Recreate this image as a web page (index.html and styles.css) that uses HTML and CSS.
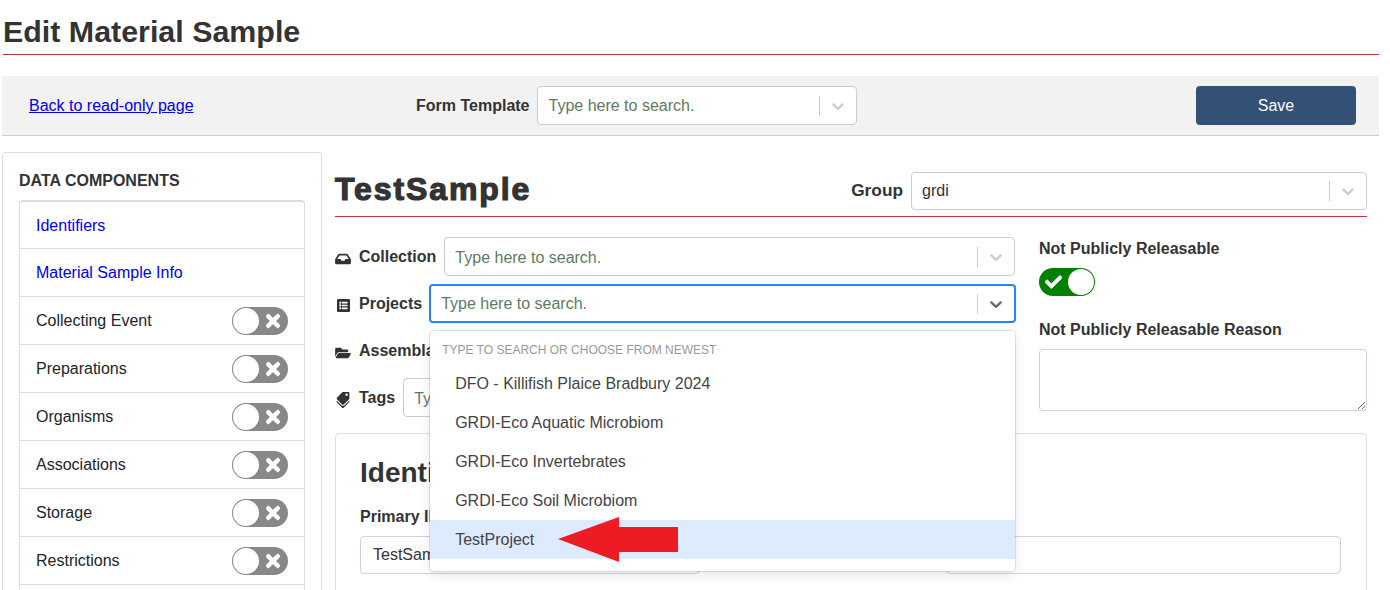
FILE: index.html
```html
<!DOCTYPE html>
<html lang="en">
<head>
    <meta charset="UTF-8">
    <meta name="viewport" content="width=device-width, initial-scale=1.0">
    <title>Edit Material Sample</title>
    <link rel="stylesheet" href="styles.css">
</head>
<body>
    <!-- Shared icons -->
    <svg class="sprite" xmlns="http://www.w3.org/2000/svg">
        <symbol id="chevron" viewBox="0 0 20 20"><path d="M4.516 7.548c0.436-0.446 1.043-0.481 1.576 0l3.908 3.747 3.908-3.747c0.533-0.481 1.141-0.446 1.574 0 0.436 0.445 0.408 1.197 0 1.615-0.406 0.418-4.695 4.502-4.695 4.502-0.217 0.223-0.502 0.335-0.787 0.335s-0.57-0.112-0.789-0.335c0 0-4.287-4.084-4.695-4.502s-0.436-1.17 0-1.615z"/></symbol>
        <symbol id="times" viewBox="0 0 352 512"><path d="M242.72 256l100.07-100.07c12.28-12.28 12.28-32.19 0-44.48l-22.24-22.24c-12.28-12.28-32.19-12.28-44.48 0L176 189.28 75.93 89.21c-12.28-12.28-32.19-12.28-44.48 0L9.21 111.45c-12.28 12.28-12.28 32.19 0 44.48L109.28 256 9.21 356.07c-12.28 12.28-12.28 32.19 0 44.48l22.24 22.24c12.28 12.28 32.2 12.28 44.48 0L176 322.72l100.07 100.07c12.28 12.28 32.2 12.28 44.48 0l22.24-22.24c12.28-12.28 12.28-32.19 0-44.48L242.72 256z"/></symbol>
        <symbol id="check" viewBox="0 0 512 512"><path d="M173.898 439.404l-166.4-166.4c-9.997-9.997-9.997-26.206 0-36.204l36.203-36.204c9.997-9.998 26.207-9.998 36.204 0L192 312.69 432.095 72.596c9.997-9.997 26.207-9.997 36.204 0l36.203 36.204c9.997 9.997 9.997 26.206 0 36.204l-294.4 294.401c-9.998 9.997-26.207 9.997-36.204-.001z"/></symbol>
        <symbol id="inbox" viewBox="0 0 576 512"><path d="M567.938 243.908L462.25 85.374A48.003 48.003 0 0 0 422.311 64H153.689a48 48 0 0 0-39.938 21.374L8.062 243.908A47.994 47.994 0 0 0 0 270.533V400c0 26.51 21.49 48 48 48h480c26.51 0 48-21.49 48-48V270.533a47.994 47.994 0 0 0-8.062-26.625zM162.252 128h251.497l85.333 128H376l-32 64H232l-32-64H76.918l85.334-128z"/></symbol>
        <symbol id="list" viewBox="0 0 512 512" preserveAspectRatio="none"><path d="M464 480H48c-26.51 0-48-21.49-48-48V80c0-26.51 21.49-48 48-48h416c26.51 0 48 21.49 48 48v352c0 26.51-21.49 48-48 48zM128 120c-22.091 0-40 17.909-40 40s17.909 40 40 40 40-17.909 40-40-17.909-40-40-40zm0 96c-22.091 0-40 17.909-40 40s17.909 40 40 40 40-17.909 40-40-17.909-40-40-40zm0 96c-22.091 0-40 17.909-40 40s17.909 40 40 40 40-17.909 40-40-17.909-40-40-40zm288-136v-32c0-6.627-5.373-12-12-12H204c-6.627 0-12 5.373-12 12v32c0 6.627 5.373 12 12 12h200c6.627 0 12-5.373 12-12zm0 96v-32c0-6.627-5.373-12-12-12H204c-6.627 0-12 5.373-12 12v32c0 6.627 5.373 12 12 12h200c6.627 0 12-5.373 12-12zm0 96v-32c0-6.627-5.373-12-12-12H204c-6.627 0-12 5.373-12 12v32c0 6.627 5.373 12 12 12h200c6.627 0 12-5.373 12-12z"/></symbol>
        <symbol id="folder" viewBox="0 0 576 512"><path d="M572.694 292.093L500.27 416.248A63.997 63.997 0 0 1 444.989 448H45.025c-18.523 0-30.064-20.093-20.731-36.093l72.424-124.155A64 64 0 0 1 152 256h399.964c18.523 0 30.064 20.093 20.73 36.093zM152 224h328v-48c0-26.51-21.49-48-48-48H272l-64-64H48C21.49 64 0 85.49 0 112v278.046l69.077-118.418C86.214 242.25 117.989 224 152 224z"/></symbol>
        <symbol id="tags" viewBox="0 0 640 512"><path d="M497.941 225.941L286.059 14.059A48 48 0 0 0 252.118 0H48C21.49 0 0 21.49 0 48v204.118a48 48 0 0 0 14.059 33.941l211.882 211.882c18.744 18.745 49.136 18.746 67.882 0l204.118-204.118c18.745-18.745 18.745-49.137 0-67.882zM112 160c-26.51 0-48-21.49-48-48s21.49-48 48-48 48 21.49 48 48-21.49 48-48 48zm513.941 133.823L421.823 497.941c-18.745 18.745-49.137 18.745-67.882 0l-.36-.36L527.64 323.522c16.999-16.999 26.36-39.6 26.36-63.64s-9.362-46.641-26.36-63.64L331.397 0h48.721a48 48 0 0 1 33.941 14.059l211.882 211.882c18.745 18.745 18.745 49.137 0 67.882z"/></symbol>
    </svg>

    <div class="page">
        <h1 class="page-title">Edit Material Sample</h1>

        <div class="button-bar">
            <div class="bar-link"><a href="#">Back to read-only page</a></div>
            <label class="bar-label">Form Template</label>
            <div class="select bar-select">
                <div class="select-value placeholder">Type here to search.</div>
                <span class="select-sep"></span>
                <svg class="select-arrow"><use href="#chevron"/></svg>
            </div>
            <button class="save-btn">Save</button>
        </div>

        <div class="content">
            <div class="sidebar">
                <div class="sidebar-title">DATA COMPONENTS</div>
                <div class="nav-list">
                    <div class="nav-item"><a href="#" class="nav-link">Identifiers</a></div>
                    <div class="nav-item"><a href="#" class="nav-link">Material Sample Info</a></div>
                    <div class="nav-item">Collecting Event <span class="toggle"><svg class="toggle-icon"><use href="#times"/></svg><span class="knob"></span></span></div>
                    <div class="nav-item">Preparations <span class="toggle"><svg class="toggle-icon"><use href="#times"/></svg><span class="knob"></span></span></div>
                    <div class="nav-item">Organisms <span class="toggle"><svg class="toggle-icon"><use href="#times"/></svg><span class="knob"></span></span></div>
                    <div class="nav-item">Associations <span class="toggle"><svg class="toggle-icon"><use href="#times"/></svg><span class="knob"></span></span></div>
                    <div class="nav-item">Storage <span class="toggle"><svg class="toggle-icon"><use href="#times"/></svg><span class="knob"></span></span></div>
                    <div class="nav-item">Restrictions <span class="toggle"><svg class="toggle-icon"><use href="#times"/></svg><span class="knob"></span></span></div>
                    <div class="nav-item"></div>
                </div>
            </div>

            <div class="main">
                <div class="sample-head">
                    <h2 class="sample-name">TestSample</h2>
                    <div class="group-field">
                        <label class="field-label group-label">Group</label>
                        <div class="select group-select">
                            <div class="select-value">grdi</div>
                            <span class="select-sep"></span>
                            <svg class="select-arrow"><use href="#chevron"/></svg>
                        </div>
                    </div>
                </div>

                <div class="form-top">
                    <div class="form-rows">
                        <div class="form-row">
                            <svg class="row-icon"><use href="#inbox"/></svg>
                            <label class="field-label">Collection</label>
                            <div class="select">
                                <div class="select-value placeholder">Type here to search.</div>
                                <span class="select-sep"></span>
                                <svg class="select-arrow"><use href="#chevron"/></svg>
                            </div>
                        </div>
                        <div class="form-row">
                            <svg class="row-icon list-icon"><use href="#list"/></svg>
                            <label class="field-label">Projects</label>
                            <div class="select select-open">
                                <div class="select-value placeholder">Type here to search.</div>
                                <span class="select-sep"></span>
                                <svg class="select-arrow"><use href="#chevron"/></svg>

                                <div class="menu">
                                    <div class="menu-heading">Type to search or choose from newest</div>
                                    <div class="menu-item">DFO - Killifish Plaice Bradbury 2024</div>
                                    <div class="menu-item">GRDI-Eco Aquatic Microbiom</div>
                                    <div class="menu-item">GRDI-Eco Invertebrates</div>
                                    <div class="menu-item">GRDI-Eco Soil Microbiom</div>
                                    <div class="menu-item active">TestProject</div>
                                </div>
                            </div>
                        </div>
                        <div class="form-row">
                            <svg class="row-icon"><use href="#folder"/></svg>
                            <label class="field-label">Assemblages</label>
                            <div class="select">
                                <div class="select-value placeholder">Type here to search.</div>
                            </div>
                        </div>
                        <div class="form-row">
                            <svg class="row-icon tag-icon"><use href="#tags"/></svg>
                            <label class="field-label">Tags</label>
                            <div class="select">
                                <div class="select-value placeholder">Type here to search.</div>
                            </div>
                        </div>
                    </div>

                    <div class="release-col">
                        <label class="field-label release-label">Not Publicly Releasable</label>
                        <span class="toggle toggle-on"><svg class="toggle-icon"><use href="#check"/></svg><span class="knob"></span></span>
                        <label class="field-label release-label reason-label">Not Publicly Releasable Reason</label>
                        <textarea class="reason-input"></textarea>
                    </div>
                </div>

                <div class="card">
                    <h2 class="card-title">Identifiers</h2>
                    <div class="id-label field-label">Primary ID</div>
                    <div class="id-row">
                        <input class="text-input first-input" type="text" value="TestSample">
                        <input class="text-input second-input" type="text">
                    </div>
                </div>
            </div>
        </div>

        <!-- Annotation drawn over the screenshot -->
        <svg class="red-arrow" width="121" height="46" viewBox="0 0 121 46">
            <polygon points="0,22 61,0 61,10 120,10 120,35 61,35 61,45" fill="#ed1c24"/>
        </svg>
    </div>
</body>
</html>
```

FILE: styles.css
```css
html, body {
    margin: 0;
    height: 590px;
    overflow: hidden;
    background-color: white;
}

body {
    font-family: "Liberation Sans", Arial, sans-serif;
    font-size: 16px;
    color: #333;
}

.sprite {
    display: none;
}

.page {
    position: relative;
    width: 1379px;
    height: 590px;
    overflow: hidden;
}

.page-title {
    margin: 0 0 21px 3px;
    padding: 14px 0 5px;
    font-size: 30.4px;
    line-height: 35px;
    font-weight: bold;
    color: #333;
    border-bottom: 1px solid #c0363c;
}

/* Top bar */
.button-bar {
    display: flex;
    align-items: center;
    box-sizing: border-box;
    height: 60px;
    margin-left: 2px;
    padding: 0 23px 0 27px;
    background-color: #f2f2f2;
    border-bottom: 1px solid #ccc;
}

.bar-link {
    width: 387px;
}

.bar-link a {
    color: #0000ee;
}

.bar-label {
    margin-right: 8px;
    font-weight: bold;
}

.save-btn {
    width: 160px;
    height: 39px;
    margin-left: auto;
    border: none;
    border-radius: 4px;
    background-color: #335075;
    color: white;
    font-family: inherit;
    font-size: 16px;
}

/* Selects */
.select {
    position: relative;
    display: flex;
    align-items: center;
    flex: 1;
    box-sizing: border-box;
    height: 39px;
    background-color: white;
    border: 1px solid #ccc;
    border-radius: 4px;
}

.bar-select {
    flex: none;
    width: 320px;
    margin-left: -1px;
}

.select-value {
    flex: 1;
    padding-left: 10px;
}

.bar-select .select-value {
    padding-left: 11px;
}

.placeholder {
    color: #5e7a62;
}

.form-row .select-value {
    padding-top: 2px;
}

.select-sep {
    width: 1px;
    height: 20px;
    background-color: #ccc;
}

.select-arrow {
    width: 20px;
    height: 20px;
    margin: 0 8px;
    fill: #ccc;
}

.select-open {
    margin: 0 -1px;
    border: 2px solid #2684ff;
}

.form-row .select-open .select-value {
    padding: 0 0 0 10px;
}

.select-open .select-arrow {
    margin-right: 8px;
    fill: #666;
}

.menu {
    position: absolute;
    top: 45px;
    left: -1px;
    right: -1px;
    z-index: 5;
    padding: 4px 0 12px;
    background-color: white;
    border-radius: 4px;
    box-shadow: 0 0 0 1px rgba(0, 0, 0, 0.1), 0 4px 11px rgba(0, 0, 0, 0.1);
}

.menu-heading {
    padding: 1px 12px 0;
    font-size: 12px;
    line-height: 28px;
    color: #999;
    text-transform: uppercase;
}

.menu-item {
    padding: 8px 12px 8px 25px;
    line-height: 23px;
    color: #444;
}

.menu-item.active {
    background-color: #deebff;
}

/* Sidebar */
.content {
    display: flex;
    gap: 13px;
    margin: 16px 0 0 2px;
}

.sidebar {
    flex: none;
    box-sizing: border-box;
    width: 320px;
    height: 600px;
    padding: 18px 16px 16px;
    border: 1px solid #ddd;
    border-radius: 4px;
}

.sidebar-title {
    margin-bottom: 9px;
    font-weight: bold;
    line-height: 20px;
    color: #333;
}

.nav-list {
    border: 1px solid #ddd;
    border-top-width: 2px;
    border-radius: 4px;
}

.nav-item {
    display: flex;
    align-items: center;
    justify-content: space-between;
    box-sizing: border-box;
    height: 48px;
    padding: 0 16px;
    border-bottom: 1px solid #ddd;
    color: #212529;
}

.nav-item:first-child {
    height: 47px;
    padding-top: 1px;
}

.nav-link {
    color: #0000ee;
    text-decoration: none;
}

/* Toggle switches */
.toggle {
    position: relative;
    display: inline-block;
    width: 56px;
    height: 28px;
    border-radius: 14px;
    background-color: #888;
}

.knob {
    position: absolute;
    top: 1px;
    left: 1px;
    width: 26px;
    height: 26px;
    border-radius: 50%;
    background-color: white;
}

.toggle-icon {
    position: absolute;
    top: 4px;
    right: 8px;
    width: 14px;
    height: 20px;
    fill: white;
    stroke: white;
    stroke-width: 25;
}

.toggle-on {
    display: block;
    background-color: #008000;
}

.toggle-on .knob {
    left: 29px;
}

.toggle-on .toggle-icon {
    left: 6px;
    right: auto;
    width: 17px;
}

/* Main column */
.main {
    flex: none;
    width: 1032px;
}

.sample-head {
    display: flex;
    align-items: center;
    justify-content: space-between;
    padding: 20px 0 6px;
    border-bottom: 1px solid #c0363c;
}

.sample-name {
    margin: -5px 0 0;
    font-size: 32px;
    line-height: 38px;
    letter-spacing: 1.9px;
    color: #333;
    -webkit-text-stroke: 1.2px #333;
}

.group-field {
    display: flex;
    align-items: center;
}

.group-select {
    flex: none;
    width: 456px;
    height: 38px;
}

.field-label {
    margin-right: 8px;
    font-weight: bold;
    white-space: nowrap;
}

.group-label {
    margin-bottom: 2px;
    font-size: 17.3px;
}

.form-top {
    display: flex;
    gap: 24px;
    margin-top: 20px;
}

.form-rows {
    display: flex;
    flex-direction: column;
    gap: 8px;
    width: 680px;
}

.form-row {
    display: flex;
    align-items: center;
    height: 39px;
}

.row-icon {
    flex: none;
    width: 16px;
    height: 14px;
    margin: 4px 8px 0 0;
    fill: #333;
}

.list-icon {
    width: 13px;
    height: 15px;
    margin: 4px 9px 0 2px;
}

.tag-icon {
    transform: rotate(90deg);
}

.release-col {
    flex: none;
    width: 328px;
}

.release-label {
    display: block;
    margin: 1px 0 8px;
    line-height: 22px;
}

.reason-label {
    margin-top: 23px;
}

.reason-input {
    display: block;
    box-sizing: border-box;
    width: 328px;
    height: 62px;
    border: 1px solid #ced4da;
    border-radius: 4px;
}

.card {
    box-sizing: border-box;
    height: 300px;
    margin-top: 16px;
    padding: 24px;
    border: 1px solid #ddd;
    border-radius: 4px;
}

.card-title {
    margin: 0 0 18px;
    font-size: 28px;
    line-height: 30px;
    color: #333;
}

.id-label {
    margin-bottom: 8px;
    line-height: 22px;
}

.id-row {
    display: flex;
    justify-content: space-between;
}

.text-input {
    box-sizing: border-box;
    height: 38px;
    padding: 0 12px;
    border: 1px solid #ced4da;
    border-radius: 4px;
    font-family: inherit;
    font-size: 16px;
    color: #333;
}

.first-input {
    width: 340px;
}

.second-input {
    width: 395px;
    margin-right: 1px;
}

.red-arrow {
    position: absolute;
    top: 517px;
    left: 558px;
    z-index: 10;
}
```
